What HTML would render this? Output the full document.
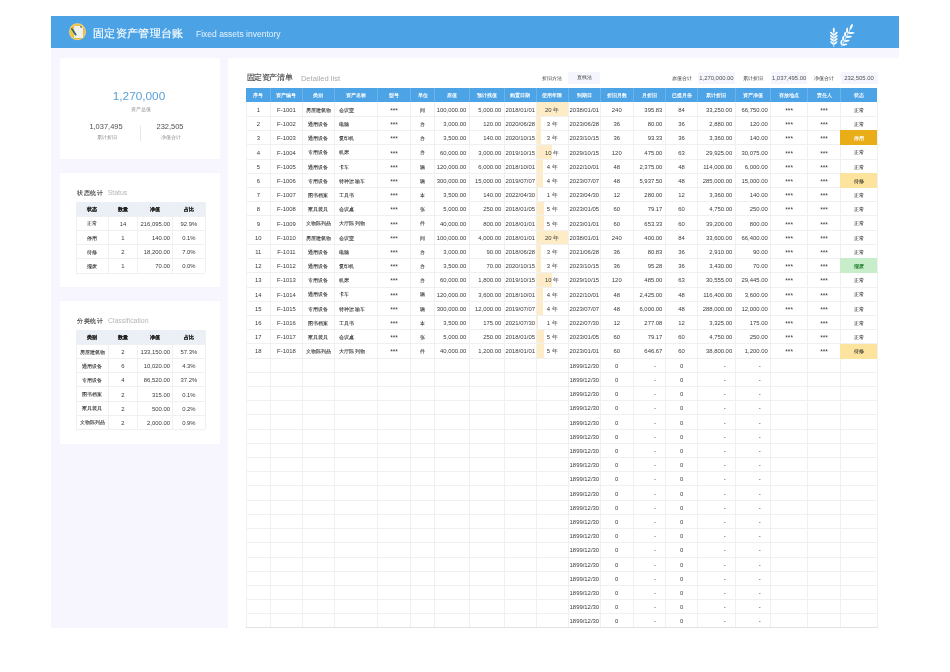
<!DOCTYPE html>
<html><head><meta charset="utf-8"><title>固定资产管理台账</title>
<style>
html,body{margin:0;padding:0;}
body{will-change:transform;width:950px;height:672px;position:relative;overflow:hidden;background:#fff;font-family:'Liberation Sans', sans-serif;color:#333;}
div{position:absolute;box-sizing:border-box;}
.hdrbar{left:51px;top:16px;width:848px;height:31.8px;background:#4ba3e6;}
.lav{background:#f7f6fe;}
.pnl{background:#fff;}
.hd{background:#4ca3e5;}
.hv{width:1px;background:rgba(255,255,255,0.18);}
.th{color:#fff;font-size:5px;text-align:center;white-space:nowrap;font-weight:bold;}
.td{font-size:5.9px;color:#3a3a3a;white-space:nowrap;padding-top:0.6px}
.tds{font-size:6.6px;color:#3a3a3a;white-space:nowrap;padding-top:1.6px}
.tz{font-size:5px;color:#2e2e2e;white-space:nowrap;letter-spacing:0.1px;padding-top:0.4px;-webkit-text-stroke:0.08px #2e2e2e}
.tzw{font-size:5px;color:#fff;white-space:nowrap;padding-top:0.4px;-webkit-text-stroke:0.15px #fff}
.tzg{font-size:5px;color:#1d7a2a;white-space:nowrap;padding-top:0.4px;-webkit-text-stroke:0.15px #1d7a2a}
.dash{font-size:5.9px;color:#3a3a3a;white-space:nowrap;padding-top:0.6px}
.bar{background:#fdecc6;}
.st1{background:#e9ad17;}
.st2{background:#fde49e;}
.st3{background:#c8edca;}
.gh{height:1px;background:#f0f0f0;}
.gv{width:1px;background:#f0f0f0;}
.gb{height:1.2px;background:#e2e2e2;}
.sh{background:#ebf0f7;}
.sth{font-size:5px;color:#222;text-align:center;white-space:nowrap;font-weight:bold;-webkit-text-stroke:0.12px #222}
.std{font-size:5.9px;color:#3a3a3a;white-space:nowrap;padding-top:0.7px}
.stz{font-size:5px;color:#2e2e2e;white-space:nowrap;-webkit-text-stroke:0.08px #2e2e2e}
</style></head><body>
<div class="hdrbar"></div>
<svg style="position:absolute;left:68px;top:22px" width="19" height="19" viewBox="0 0 19 19">
 <circle cx="9.5" cy="9.8" r="8.5" fill="#f3d77e"/>
 <circle cx="9.5" cy="9.8" r="7.7" fill="#efc445"/>
 <path d="M6.8 4.6 L13.6 4.6 L15.6 6.6 L15.6 16.4 L6.8 16.4 Z" fill="#dcae35" opacity="0.7"/>
 <path d="M6.2 3.9 L13.2 3.9 L15.0 5.8 L15.0 15.9 L6.2 15.9 Z" fill="#eef0f2"/>
 <path d="M3.7 7.4 L4.5 6.9 L8.3 12.7 L7.5 13.3 Z" fill="#2b6b73" stroke="#2b6b73" stroke-width="0.9"/>
 <path d="M3.3 6.6 L4.3 6.1" stroke="#1c2b30" stroke-width="0.9"/>
 <path d="M12.4 4.4 L13.6 5.6" stroke="#2b4b55" stroke-width="1.1"/>
</svg>
<div style="left:93px;top:26px;font-size:11px;letter-spacing:0.35px;color:#fff;-webkit-text-stroke:0.15px #fff;white-space:nowrap;line-height:14px">固定资产管理台账</div>
<div style="left:196px;top:29px;font-size:8.5px;color:#e8f3fc;white-space:nowrap;line-height:10px">Fixed assets inventory</div>
<svg style="position:absolute;left:826px;top:22px" width="32" height="26" viewBox="0 0 32 26">

 <g fill="#fff">
  <rect x="7.45" y="8" width="0.7" height="17" />
  <ellipse cx="7.8" cy="8.0" rx="1.0" ry="2.6"/>
  <ellipse cx="5.9" cy="11.6" rx="0.95" ry="2.4" transform="rotate(-48 5.9 11.6)"/>
  <ellipse cx="9.7" cy="11.6" rx="0.95" ry="2.4" transform="rotate(48 9.7 11.6)"/>
  <ellipse cx="5.9" cy="14.7" rx="0.95" ry="2.4" transform="rotate(-48 5.9 14.7)"/>
  <ellipse cx="9.7" cy="14.7" rx="0.95" ry="2.4" transform="rotate(48 9.7 14.7)"/>
  <ellipse cx="5.9" cy="17.8" rx="0.95" ry="2.4" transform="rotate(-48 5.9 17.8)"/>
  <ellipse cx="9.7" cy="17.8" rx="0.95" ry="2.4" transform="rotate(48 9.7 17.8)"/>
  <ellipse cx="6.0" cy="20.9" rx="0.95" ry="2.3" transform="rotate(-48 6.0 20.9)"/>
  <ellipse cx="9.6" cy="20.9" rx="0.95" ry="2.3" transform="rotate(48 9.6 20.9)"/>
  <g transform="translate(15.6 24.6) rotate(26)">
   <rect x="-0.35" y="-22" width="0.7" height="22"/>
   <ellipse cx="0" cy="-22" rx="1.1" ry="3.0"/>
   <ellipse cx="-2.2" cy="-17" rx="1.0" ry="2.9" transform="rotate(-22 -2.2 -17)"/>
   <ellipse cx="2.7" cy="-16.5" rx="1.0" ry="3.3" transform="rotate(62 2.7 -16.5)"/>
   <ellipse cx="-2.2" cy="-12.5" rx="1.0" ry="2.7" transform="rotate(-22 -2.2 -12.5)"/>
   <ellipse cx="2.4" cy="-12" rx="1.0" ry="2.9" transform="rotate(58 2.4 -12)"/>
   <ellipse cx="-2.2" cy="-8" rx="1.0" ry="2.6" transform="rotate(-22 -2.2 -8)"/>
   <ellipse cx="2.2" cy="-7.5" rx="0.95" ry="2.7" transform="rotate(55 2.2 -7.5)"/>
   <ellipse cx="-2.0" cy="-3.6" rx="0.95" ry="2.4" transform="rotate(-22 -2.0 -3.6)"/>
   <ellipse cx="2.0" cy="-3.2" rx="0.95" ry="2.5" transform="rotate(55 2.0 -3.2)"/>
  </g>
 </g>
</svg>
<div class="lav" style="left:51px;top:47.8px;width:848px;height:10.2px"></div>
<div class="lav" style="left:51px;top:58px;width:177px;height:570.4px"></div>
<div class="pnl" style="left:60.3px;top:58px;width:160px;height:101px"></div>
<div class="pnl" style="left:60.3px;top:173px;width:160px;height:114px"></div>
<div class="pnl" style="left:60.3px;top:300.8px;width:160px;height:143px"></div>
<div style="left:60px;top:89px;width:158px;text-align:center;font-size:11.8px;color:#5a9fd6;line-height:14px">1,270,000</div>
<div style="left:61.6px;top:107px;width:158px;text-align:center;font-size:4.6px;color:#888;line-height:6px">资产总值</div>
<div style="left:76px;top:121.5px;width:60px;text-align:center;font-size:7.46px;color:#505050;line-height:10px">1,037,495</div>
<div style="left:140px;top:121.5px;width:60px;text-align:center;font-size:7.46px;color:#505050;line-height:10px">232,505</div>
<div style="left:77.4px;top:135.3px;width:60px;text-align:center;font-size:4.6px;color:#888;line-height:6px">累计折旧</div>
<div style="left:141.4px;top:135.3px;width:60px;text-align:center;font-size:4.6px;color:#888;line-height:6px">净值合计</div>
<div style="left:140px;top:126px;width:0.8px;height:15px;background:#e6e6e6"></div>
<div style="left:77px;top:189.4px;font-size:6px;letter-spacing:0.6px;color:#444;-webkit-text-stroke:0.15px #444;white-space:nowrap;line-height:8px">状态统计 <span style="letter-spacing:0;-webkit-text-stroke:0"><span style="color:#b5b5b5;font-size:6.9px;margin-left:2px">Status</span></span></div>
<div style="left:77px;top:316.9px;font-size:6px;letter-spacing:0.65px;color:#444;-webkit-text-stroke:0.15px #444;white-space:nowrap;line-height:8px">分类统计 <span style="letter-spacing:0;-webkit-text-stroke:0"><span style="color:#b5b5b5;font-size:6.9px;margin-left:2px">Classification</span></span></div>
<div class="sh" style="left:76.2px;top:202.0px;width:129.0px;height:14.4px"></div>
<div class="sth" style="left:76.2px;top:202.00px;width:32.20px;height:14.40px;line-height:14.40px">状态</div>
<div class="sth" style="left:108.4px;top:202.00px;width:29.10px;height:14.40px;line-height:14.40px">数量</div>
<div class="sth" style="left:137.5px;top:202.00px;width:35.00px;height:14.40px;line-height:14.40px">净值</div>
<div class="sth" style="left:172.5px;top:202.00px;width:32.70px;height:14.40px;line-height:14.40px">占比</div>
<div class="stz" style="left:76.20px;width:32.20px;text-align:center;top:216.40px;height:14.20px;line-height:14.20px">正常</div>
<div class="std" style="left:108.40px;width:29.10px;text-align:center;top:216.40px;height:14.20px;line-height:14.20px">14</div>
<div class="std" style="left:137.50px;width:32.50px;text-align:right;top:216.40px;height:14.20px;line-height:14.20px">216,095.00</div>
<div class="std" style="left:172.50px;width:32.70px;text-align:center;top:216.40px;height:14.20px;line-height:14.20px">92.9%</div>
<div class="stz" style="left:76.20px;width:32.20px;text-align:center;top:230.60px;height:14.10px;line-height:14.10px">停用</div>
<div class="std" style="left:108.40px;width:29.10px;text-align:center;top:230.60px;height:14.10px;line-height:14.10px">1</div>
<div class="std" style="left:137.50px;width:32.50px;text-align:right;top:230.60px;height:14.10px;line-height:14.10px">140.00</div>
<div class="std" style="left:172.50px;width:32.70px;text-align:center;top:230.60px;height:14.10px;line-height:14.10px">0.1%</div>
<div class="stz" style="left:76.20px;width:32.20px;text-align:center;top:244.70px;height:14.10px;line-height:14.10px">待修</div>
<div class="std" style="left:108.40px;width:29.10px;text-align:center;top:244.70px;height:14.10px;line-height:14.10px">2</div>
<div class="std" style="left:137.50px;width:32.50px;text-align:right;top:244.70px;height:14.10px;line-height:14.10px">18,200.00</div>
<div class="std" style="left:172.50px;width:32.70px;text-align:center;top:244.70px;height:14.10px;line-height:14.10px">7.0%</div>
<div class="stz" style="left:76.20px;width:32.20px;text-align:center;top:258.80px;height:14.30px;line-height:14.30px">报废</div>
<div class="std" style="left:108.40px;width:29.10px;text-align:center;top:258.80px;height:14.30px;line-height:14.30px">1</div>
<div class="std" style="left:137.50px;width:32.50px;text-align:right;top:258.80px;height:14.30px;line-height:14.30px">70.00</div>
<div class="std" style="left:172.50px;width:32.70px;text-align:center;top:258.80px;height:14.30px;line-height:14.30px">0.0%</div>
<div class="gh" style="left:76.2px;top:215.90px;width:129.0px"></div>
<div class="gh" style="left:76.2px;top:230.10px;width:129.0px"></div>
<div class="gh" style="left:76.2px;top:244.20px;width:129.0px"></div>
<div class="gh" style="left:76.2px;top:258.30px;width:129.0px"></div>
<div class="gh" style="left:76.2px;top:272.60px;width:129.0px"></div>
<div class="gv" style="left:75.70px;top:202.00px;height:71.10px"></div>
<div class="gv" style="left:107.90px;top:202.00px;height:71.10px"></div>
<div class="gv" style="left:137.00px;top:202.00px;height:71.10px"></div>
<div class="gv" style="left:172.00px;top:202.00px;height:71.10px"></div>
<div class="gv" style="left:204.70px;top:202.00px;height:71.10px"></div>
<div class="sh" style="left:76.2px;top:330.0px;width:129.0px;height:14.6px"></div>
<div class="sth" style="left:76.2px;top:330.00px;width:32.20px;height:14.60px;line-height:14.60px">类别</div>
<div class="sth" style="left:108.4px;top:330.00px;width:29.10px;height:14.60px;line-height:14.60px">数量</div>
<div class="sth" style="left:137.5px;top:330.00px;width:35.00px;height:14.60px;line-height:14.60px">净值</div>
<div class="sth" style="left:172.5px;top:330.00px;width:32.70px;height:14.60px;line-height:14.60px">占比</div>
<div class="stz" style="left:76.20px;width:32.20px;text-align:center;top:344.60px;height:14.00px;line-height:14.00px">房屋建筑物</div>
<div class="std" style="left:108.40px;width:29.10px;text-align:center;top:344.60px;height:14.00px;line-height:14.00px">2</div>
<div class="std" style="left:137.50px;width:32.50px;text-align:right;top:344.60px;height:14.00px;line-height:14.00px">133,150.00</div>
<div class="std" style="left:172.50px;width:32.70px;text-align:center;top:344.60px;height:14.00px;line-height:14.00px">57.3%</div>
<div class="stz" style="left:76.20px;width:32.20px;text-align:center;top:358.60px;height:14.10px;line-height:14.10px">通用设备</div>
<div class="std" style="left:108.40px;width:29.10px;text-align:center;top:358.60px;height:14.10px;line-height:14.10px">6</div>
<div class="std" style="left:137.50px;width:32.50px;text-align:right;top:358.60px;height:14.10px;line-height:14.10px">10,020.00</div>
<div class="std" style="left:172.50px;width:32.70px;text-align:center;top:358.60px;height:14.10px;line-height:14.10px">4.3%</div>
<div class="stz" style="left:76.20px;width:32.20px;text-align:center;top:372.70px;height:14.20px;line-height:14.20px">专用设备</div>
<div class="std" style="left:108.40px;width:29.10px;text-align:center;top:372.70px;height:14.20px;line-height:14.20px">4</div>
<div class="std" style="left:137.50px;width:32.50px;text-align:right;top:372.70px;height:14.20px;line-height:14.20px">86,520.00</div>
<div class="std" style="left:172.50px;width:32.70px;text-align:center;top:372.70px;height:14.20px;line-height:14.20px">37.2%</div>
<div class="stz" style="left:76.20px;width:32.20px;text-align:center;top:386.90px;height:14.20px;line-height:14.20px">图书档案</div>
<div class="std" style="left:108.40px;width:29.10px;text-align:center;top:386.90px;height:14.20px;line-height:14.20px">2</div>
<div class="std" style="left:137.50px;width:32.50px;text-align:right;top:386.90px;height:14.20px;line-height:14.20px">315.00</div>
<div class="std" style="left:172.50px;width:32.70px;text-align:center;top:386.90px;height:14.20px;line-height:14.20px">0.1%</div>
<div class="stz" style="left:76.20px;width:32.20px;text-align:center;top:401.10px;height:14.20px;line-height:14.20px">家具装具</div>
<div class="std" style="left:108.40px;width:29.10px;text-align:center;top:401.10px;height:14.20px;line-height:14.20px">2</div>
<div class="std" style="left:137.50px;width:32.50px;text-align:right;top:401.10px;height:14.20px;line-height:14.20px">500.00</div>
<div class="std" style="left:172.50px;width:32.70px;text-align:center;top:401.10px;height:14.20px;line-height:14.20px">0.2%</div>
<div class="stz" style="left:76.20px;width:32.20px;text-align:center;top:415.30px;height:14.00px;line-height:14.00px">文物陈列品</div>
<div class="std" style="left:108.40px;width:29.10px;text-align:center;top:415.30px;height:14.00px;line-height:14.00px">2</div>
<div class="std" style="left:137.50px;width:32.50px;text-align:right;top:415.30px;height:14.00px;line-height:14.00px">2,000.00</div>
<div class="std" style="left:172.50px;width:32.70px;text-align:center;top:415.30px;height:14.00px;line-height:14.00px">0.9%</div>
<div class="gh" style="left:76.2px;top:344.10px;width:129.0px"></div>
<div class="gh" style="left:76.2px;top:358.10px;width:129.0px"></div>
<div class="gh" style="left:76.2px;top:372.20px;width:129.0px"></div>
<div class="gh" style="left:76.2px;top:386.40px;width:129.0px"></div>
<div class="gh" style="left:76.2px;top:400.60px;width:129.0px"></div>
<div class="gh" style="left:76.2px;top:414.80px;width:129.0px"></div>
<div class="gh" style="left:76.2px;top:428.80px;width:129.0px"></div>
<div class="gv" style="left:75.70px;top:330.00px;height:99.30px"></div>
<div class="gv" style="left:107.90px;top:330.00px;height:99.30px"></div>
<div class="gv" style="left:137.00px;top:330.00px;height:99.30px"></div>
<div class="gv" style="left:172.00px;top:330.00px;height:99.30px"></div>
<div class="gv" style="left:204.70px;top:330.00px;height:99.30px"></div>
<div style="left:246.6px;top:73.3px;font-size:8px;letter-spacing:-0.4px;color:#333;-webkit-text-stroke:0.1px #333;white-space:nowrap;line-height:9px">固定资产清单</div>
<div style="left:300.9px;top:73.5px;font-size:7.6px;color:#aaa;white-space:nowrap;line-height:9px">Detailed list</div>
<div style="left:536.2px;top:72px;width:32px;height:11.5px;line-height:11.5px;padding-top:0.5px;text-align:center;font-size:5px;color:#333">折旧方法</div>
<div style="left:568.2px;top:71.8px;width:32.3px;height:11.8px;line-height:11.8px;padding-top:0.5px;text-align:center;font-size:5px;color:#333;background:#f5f5fd">直线法</div>
<div style="left:665.4px;top:72px;width:32.3px;height:11.5px;line-height:11.5px;padding-top:0.5px;text-align:center;font-size:5px;color:#333">原值合计</div>
<div style="left:697.7px;top:71.8px;width:37.5px;height:11.8px;line-height:11.8px;padding-top:1px;text-align:center;font-size:5.9px;color:#505050;background:#f5f5fd">1,270,000.00</div>
<div style="left:735.2px;top:72px;width:35.6px;height:11.5px;line-height:11.5px;padding-top:0.5px;text-align:center;font-size:5px;color:#333">累计折旧</div>
<div style="left:770.8px;top:71.8px;width:36.7px;height:11.8px;line-height:11.8px;padding-top:1px;text-align:center;font-size:5.9px;color:#505050;background:#f5f5fd">1,037,495.00</div>
<div style="left:807.5px;top:72px;width:33px;height:11.5px;line-height:11.5px;padding-top:0.5px;text-align:center;font-size:5px;color:#333">净值合计</div>
<div style="left:840.5px;top:71.8px;width:37px;height:11.8px;line-height:11.8px;padding-top:1px;text-align:center;font-size:5.9px;color:#505050;background:#f5f5fd">232,505.00</div>
<div class="hd" style="left:246.2px;top:88.2px;width:631.3px;height:14.1px"></div>
<div class="hv" style="left:269.90px;top:88.2px;height:14.1px"></div>
<div class="hv" style="left:302.00px;top:88.2px;height:14.1px"></div>
<div class="hv" style="left:333.80px;top:88.2px;height:14.1px"></div>
<div class="hv" style="left:377.10px;top:88.2px;height:14.1px"></div>
<div class="hv" style="left:409.90px;top:88.2px;height:14.1px"></div>
<div class="hv" style="left:434.30px;top:88.2px;height:14.1px"></div>
<div class="hv" style="left:468.80px;top:88.2px;height:14.1px"></div>
<div class="hv" style="left:503.80px;top:88.2px;height:14.1px"></div>
<div class="hv" style="left:535.70px;top:88.2px;height:14.1px"></div>
<div class="hv" style="left:567.70px;top:88.2px;height:14.1px"></div>
<div class="hv" style="left:600.00px;top:88.2px;height:14.1px"></div>
<div class="hv" style="left:632.50px;top:88.2px;height:14.1px"></div>
<div class="hv" style="left:664.90px;top:88.2px;height:14.1px"></div>
<div class="hv" style="left:697.20px;top:88.2px;height:14.1px"></div>
<div class="hv" style="left:734.70px;top:88.2px;height:14.1px"></div>
<div class="hv" style="left:770.30px;top:88.2px;height:14.1px"></div>
<div class="hv" style="left:807.00px;top:88.2px;height:14.1px"></div>
<div class="hv" style="left:840.00px;top:88.2px;height:14.1px"></div>
<div class="th" style="left:246.2px;top:88.2px;width:24.20px;height:14.1px;line-height:14.1px">序号</div>
<div class="th" style="left:270.4px;top:88.2px;width:32.10px;height:14.1px;line-height:14.1px">资产编号</div>
<div class="th" style="left:302.5px;top:88.2px;width:31.80px;height:14.1px;line-height:14.1px">类别</div>
<div class="th" style="left:334.3px;top:88.2px;width:43.30px;height:14.1px;line-height:14.1px">资产名称</div>
<div class="th" style="left:377.6px;top:88.2px;width:32.80px;height:14.1px;line-height:14.1px">型号</div>
<div class="th" style="left:410.4px;top:88.2px;width:24.40px;height:14.1px;line-height:14.1px">单位</div>
<div class="th" style="left:434.8px;top:88.2px;width:34.50px;height:14.1px;line-height:14.1px">原值</div>
<div class="th" style="left:469.3px;top:88.2px;width:35.00px;height:14.1px;line-height:14.1px">预计残值</div>
<div class="th" style="left:504.3px;top:88.2px;width:31.90px;height:14.1px;line-height:14.1px">购置日期</div>
<div class="th" style="left:536.2px;top:88.2px;width:32.00px;height:14.1px;line-height:14.1px">使用年限</div>
<div class="th" style="left:568.2px;top:88.2px;width:32.30px;height:14.1px;line-height:14.1px">到期日</div>
<div class="th" style="left:600.5px;top:88.2px;width:32.50px;height:14.1px;line-height:14.1px">折旧月数</div>
<div class="th" style="left:633.0px;top:88.2px;width:32.40px;height:14.1px;line-height:14.1px">月折旧</div>
<div class="th" style="left:665.4px;top:88.2px;width:32.30px;height:14.1px;line-height:14.1px">已提月份</div>
<div class="th" style="left:697.7px;top:88.2px;width:37.50px;height:14.1px;line-height:14.1px">累计折旧</div>
<div class="th" style="left:735.2px;top:88.2px;width:35.60px;height:14.1px;line-height:14.1px">资产净值</div>
<div class="th" style="left:770.8px;top:88.2px;width:36.70px;height:14.1px;line-height:14.1px">存放地点</div>
<div class="th" style="left:807.5px;top:88.2px;width:33.00px;height:14.1px;line-height:14.1px">责任人</div>
<div class="th" style="left:840.5px;top:88.2px;width:37.00px;height:14.1px;line-height:14.1px">状态</div>
<div class="bar" style="left:536.20px;top:102.30px;width:32.00px;height:14.21px"></div>
<div class="bar" style="left:536.20px;top:116.51px;width:4.80px;height:14.21px"></div>
<div class="bar" style="left:536.20px;top:130.72px;width:4.80px;height:14.21px"></div>
<div class="bar" style="left:536.20px;top:144.93px;width:16.00px;height:14.21px"></div>
<div class="bar" style="left:536.20px;top:159.14px;width:6.40px;height:14.21px"></div>
<div class="bar" style="left:536.20px;top:173.35px;width:6.40px;height:14.21px"></div>
<div class="bar" style="left:536.20px;top:187.56px;width:1.60px;height:14.21px"></div>
<div class="bar" style="left:536.20px;top:201.77px;width:8.00px;height:14.21px"></div>
<div class="bar" style="left:536.20px;top:215.98px;width:8.00px;height:14.21px"></div>
<div class="bar" style="left:536.20px;top:230.19px;width:32.00px;height:14.21px"></div>
<div class="bar" style="left:536.20px;top:244.40px;width:4.80px;height:14.21px"></div>
<div class="bar" style="left:536.20px;top:258.61px;width:4.80px;height:14.21px"></div>
<div class="bar" style="left:536.20px;top:272.82px;width:16.00px;height:14.21px"></div>
<div class="bar" style="left:536.20px;top:287.03px;width:6.40px;height:14.21px"></div>
<div class="bar" style="left:536.20px;top:301.24px;width:6.40px;height:14.21px"></div>
<div class="bar" style="left:536.20px;top:315.45px;width:1.60px;height:14.21px"></div>
<div class="bar" style="left:536.20px;top:329.66px;width:8.00px;height:14.21px"></div>
<div class="bar" style="left:536.20px;top:343.87px;width:8.00px;height:14.21px"></div>
<div class="gh" style="left:246.2px;top:116.01px;width:631.30px"></div>
<div class="gh" style="left:246.2px;top:130.22px;width:631.30px"></div>
<div class="gh" style="left:246.2px;top:144.43px;width:631.30px"></div>
<div class="gh" style="left:246.2px;top:158.64px;width:631.30px"></div>
<div class="gh" style="left:246.2px;top:172.85px;width:631.30px"></div>
<div class="gh" style="left:246.2px;top:187.06px;width:631.30px"></div>
<div class="gh" style="left:246.2px;top:201.27px;width:631.30px"></div>
<div class="gh" style="left:246.2px;top:215.48px;width:631.30px"></div>
<div class="gh" style="left:246.2px;top:229.69px;width:631.30px"></div>
<div class="gh" style="left:246.2px;top:243.90px;width:631.30px"></div>
<div class="gh" style="left:246.2px;top:258.11px;width:631.30px"></div>
<div class="gh" style="left:246.2px;top:272.32px;width:631.30px"></div>
<div class="gh" style="left:246.2px;top:286.53px;width:631.30px"></div>
<div class="gh" style="left:246.2px;top:300.74px;width:631.30px"></div>
<div class="gh" style="left:246.2px;top:314.95px;width:631.30px"></div>
<div class="gh" style="left:246.2px;top:329.16px;width:631.30px"></div>
<div class="gh" style="left:246.2px;top:343.37px;width:631.30px"></div>
<div class="gh" style="left:246.2px;top:357.58px;width:631.30px"></div>
<div class="gh" style="left:246.2px;top:371.79px;width:631.30px"></div>
<div class="gh" style="left:246.2px;top:386.00px;width:631.30px"></div>
<div class="gh" style="left:246.2px;top:400.21px;width:631.30px"></div>
<div class="gh" style="left:246.2px;top:414.42px;width:631.30px"></div>
<div class="gh" style="left:246.2px;top:428.63px;width:631.30px"></div>
<div class="gh" style="left:246.2px;top:442.84px;width:631.30px"></div>
<div class="gh" style="left:246.2px;top:457.05px;width:631.30px"></div>
<div class="gh" style="left:246.2px;top:471.26px;width:631.30px"></div>
<div class="gh" style="left:246.2px;top:485.47px;width:631.30px"></div>
<div class="gh" style="left:246.2px;top:499.68px;width:631.30px"></div>
<div class="gh" style="left:246.2px;top:513.89px;width:631.30px"></div>
<div class="gh" style="left:246.2px;top:528.10px;width:631.30px"></div>
<div class="gh" style="left:246.2px;top:542.31px;width:631.30px"></div>
<div class="gh" style="left:246.2px;top:556.52px;width:631.30px"></div>
<div class="gh" style="left:246.2px;top:570.73px;width:631.30px"></div>
<div class="gh" style="left:246.2px;top:584.94px;width:631.30px"></div>
<div class="gh" style="left:246.2px;top:599.15px;width:631.30px"></div>
<div class="gh" style="left:246.2px;top:613.36px;width:631.30px"></div>
<div class="gv" style="left:245.70px;top:102.30px;height:525.77px"></div>
<div class="gv" style="left:269.90px;top:102.30px;height:525.77px"></div>
<div class="gv" style="left:302.00px;top:102.30px;height:525.77px"></div>
<div class="gv" style="left:333.80px;top:102.30px;height:525.77px"></div>
<div class="gv" style="left:377.10px;top:102.30px;height:525.77px"></div>
<div class="gv" style="left:409.90px;top:102.30px;height:525.77px"></div>
<div class="gv" style="left:434.30px;top:102.30px;height:525.77px"></div>
<div class="gv" style="left:468.80px;top:102.30px;height:525.77px"></div>
<div class="gv" style="left:503.80px;top:102.30px;height:525.77px"></div>
<div class="gv" style="left:535.70px;top:102.30px;height:525.77px"></div>
<div class="gv" style="left:567.70px;top:102.30px;height:525.77px"></div>
<div class="gv" style="left:600.00px;top:102.30px;height:525.77px"></div>
<div class="gv" style="left:632.50px;top:102.30px;height:525.77px"></div>
<div class="gv" style="left:664.90px;top:102.30px;height:525.77px"></div>
<div class="gv" style="left:697.20px;top:102.30px;height:525.77px"></div>
<div class="gv" style="left:734.70px;top:102.30px;height:525.77px"></div>
<div class="gv" style="left:770.30px;top:102.30px;height:525.77px"></div>
<div class="gv" style="left:807.00px;top:102.30px;height:525.77px"></div>
<div class="gv" style="left:840.00px;top:102.30px;height:525.77px"></div>
<div class="gv" style="left:877.00px;top:102.30px;height:525.77px"></div>
<div class="gb" style="left:245.7px;top:627.27px;width:632.30px"></div>
<div class="st1" style="left:840.10px;top:130.42px;width:37.40px;height:15.01px"></div>
<div class="st2" style="left:840.10px;top:173.05px;width:37.40px;height:15.01px"></div>
<div class="st3" style="left:840.10px;top:258.31px;width:37.40px;height:15.01px"></div>
<div class="st2" style="left:840.10px;top:343.57px;width:37.40px;height:15.01px"></div>
<div class="td" style="left:246.20px;width:24.20px;text-align:center;top:102.30px;height:14.21px;line-height:14.21px">1</div>
<div class="td" style="left:270.40px;width:32.10px;text-align:center;top:102.30px;height:14.21px;line-height:14.21px">F-1001</div>
<div class="tz" style="left:302.50px;width:31.80px;text-align:center;top:102.30px;height:14.21px;line-height:14.21px">房屋建筑物</div>
<div class="tz" style="left:339.30px;width:43.30px;text-align:left;top:102.30px;height:14.21px;line-height:14.21px">会议室</div>
<div class="tds" style="left:377.60px;width:32.80px;text-align:center;top:102.30px;height:14.21px;line-height:14.21px">***</div>
<div class="tz" style="left:410.40px;width:24.40px;text-align:center;top:102.30px;height:14.21px;line-height:14.21px">间</div>
<div class="td" style="left:434.80px;width:31.50px;text-align:right;top:102.30px;height:14.21px;line-height:14.21px">100,000.00</div>
<div class="td" style="left:469.30px;width:32.00px;text-align:right;top:102.30px;height:14.21px;line-height:14.21px">5,000.00</div>
<div class="td" style="left:504.30px;width:31.90px;text-align:center;top:102.30px;height:14.21px;line-height:14.21px">2018/01/01</div>
<div class="td" style="left:536.20px;width:32.00px;text-align:center;top:102.30px;height:14.21px;line-height:14.21px">20 年</div>
<div class="td" style="left:568.20px;width:32.30px;text-align:center;top:102.30px;height:14.21px;line-height:14.21px">2038/01/01</div>
<div class="td" style="left:600.50px;width:32.50px;text-align:center;top:102.30px;height:14.21px;line-height:14.21px">240</div>
<div class="td" style="left:633.00px;width:29.40px;text-align:right;top:102.30px;height:14.21px;line-height:14.21px">395.83</div>
<div class="td" style="left:665.40px;width:32.30px;text-align:center;top:102.30px;height:14.21px;line-height:14.21px">84</div>
<div class="td" style="left:697.70px;width:34.50px;text-align:right;top:102.30px;height:14.21px;line-height:14.21px">33,250.00</div>
<div class="td" style="left:735.20px;width:32.60px;text-align:right;top:102.30px;height:14.21px;line-height:14.21px">66,750.00</div>
<div class="tds" style="left:770.80px;width:36.70px;text-align:center;top:102.30px;height:14.21px;line-height:14.21px">***</div>
<div class="tds" style="left:807.50px;width:33.00px;text-align:center;top:102.30px;height:14.21px;line-height:14.21px">***</div>
<div class="tz" style="left:840.50px;width:37.00px;text-align:center;top:102.30px;height:14.21px;line-height:14.21px">正常</div>
<div class="td" style="left:246.20px;width:24.20px;text-align:center;top:116.51px;height:14.21px;line-height:14.21px">2</div>
<div class="td" style="left:270.40px;width:32.10px;text-align:center;top:116.51px;height:14.21px;line-height:14.21px">F-1002</div>
<div class="tz" style="left:302.50px;width:31.80px;text-align:center;top:116.51px;height:14.21px;line-height:14.21px">通用设备</div>
<div class="tz" style="left:339.30px;width:43.30px;text-align:left;top:116.51px;height:14.21px;line-height:14.21px">电脑</div>
<div class="tds" style="left:377.60px;width:32.80px;text-align:center;top:116.51px;height:14.21px;line-height:14.21px">***</div>
<div class="tz" style="left:410.40px;width:24.40px;text-align:center;top:116.51px;height:14.21px;line-height:14.21px">台</div>
<div class="td" style="left:434.80px;width:31.50px;text-align:right;top:116.51px;height:14.21px;line-height:14.21px">3,000.00</div>
<div class="td" style="left:469.30px;width:32.00px;text-align:right;top:116.51px;height:14.21px;line-height:14.21px">120.00</div>
<div class="td" style="left:504.30px;width:31.90px;text-align:center;top:116.51px;height:14.21px;line-height:14.21px">2020/06/28</div>
<div class="td" style="left:536.20px;width:32.00px;text-align:center;top:116.51px;height:14.21px;line-height:14.21px">3 年</div>
<div class="td" style="left:568.20px;width:32.30px;text-align:center;top:116.51px;height:14.21px;line-height:14.21px">2023/06/28</div>
<div class="td" style="left:600.50px;width:32.50px;text-align:center;top:116.51px;height:14.21px;line-height:14.21px">36</div>
<div class="td" style="left:633.00px;width:29.40px;text-align:right;top:116.51px;height:14.21px;line-height:14.21px">80.00</div>
<div class="td" style="left:665.40px;width:32.30px;text-align:center;top:116.51px;height:14.21px;line-height:14.21px">36</div>
<div class="td" style="left:697.70px;width:34.50px;text-align:right;top:116.51px;height:14.21px;line-height:14.21px">2,880.00</div>
<div class="td" style="left:735.20px;width:32.60px;text-align:right;top:116.51px;height:14.21px;line-height:14.21px">120.00</div>
<div class="tds" style="left:770.80px;width:36.70px;text-align:center;top:116.51px;height:14.21px;line-height:14.21px">***</div>
<div class="tds" style="left:807.50px;width:33.00px;text-align:center;top:116.51px;height:14.21px;line-height:14.21px">***</div>
<div class="tz" style="left:840.50px;width:37.00px;text-align:center;top:116.51px;height:14.21px;line-height:14.21px">正常</div>
<div class="td" style="left:246.20px;width:24.20px;text-align:center;top:130.72px;height:14.21px;line-height:14.21px">3</div>
<div class="td" style="left:270.40px;width:32.10px;text-align:center;top:130.72px;height:14.21px;line-height:14.21px">F-1003</div>
<div class="tz" style="left:302.50px;width:31.80px;text-align:center;top:130.72px;height:14.21px;line-height:14.21px">通用设备</div>
<div class="tz" style="left:339.30px;width:43.30px;text-align:left;top:130.72px;height:14.21px;line-height:14.21px">复印机</div>
<div class="tds" style="left:377.60px;width:32.80px;text-align:center;top:130.72px;height:14.21px;line-height:14.21px">***</div>
<div class="tz" style="left:410.40px;width:24.40px;text-align:center;top:130.72px;height:14.21px;line-height:14.21px">台</div>
<div class="td" style="left:434.80px;width:31.50px;text-align:right;top:130.72px;height:14.21px;line-height:14.21px">3,500.00</div>
<div class="td" style="left:469.30px;width:32.00px;text-align:right;top:130.72px;height:14.21px;line-height:14.21px">140.00</div>
<div class="td" style="left:504.30px;width:31.90px;text-align:center;top:130.72px;height:14.21px;line-height:14.21px">2020/10/15</div>
<div class="td" style="left:536.20px;width:32.00px;text-align:center;top:130.72px;height:14.21px;line-height:14.21px">3 年</div>
<div class="td" style="left:568.20px;width:32.30px;text-align:center;top:130.72px;height:14.21px;line-height:14.21px">2023/10/15</div>
<div class="td" style="left:600.50px;width:32.50px;text-align:center;top:130.72px;height:14.21px;line-height:14.21px">36</div>
<div class="td" style="left:633.00px;width:29.40px;text-align:right;top:130.72px;height:14.21px;line-height:14.21px">93.33</div>
<div class="td" style="left:665.40px;width:32.30px;text-align:center;top:130.72px;height:14.21px;line-height:14.21px">36</div>
<div class="td" style="left:697.70px;width:34.50px;text-align:right;top:130.72px;height:14.21px;line-height:14.21px">3,360.00</div>
<div class="td" style="left:735.20px;width:32.60px;text-align:right;top:130.72px;height:14.21px;line-height:14.21px">140.00</div>
<div class="tds" style="left:770.80px;width:36.70px;text-align:center;top:130.72px;height:14.21px;line-height:14.21px">***</div>
<div class="tds" style="left:807.50px;width:33.00px;text-align:center;top:130.72px;height:14.21px;line-height:14.21px">***</div>
<div class="tzw" style="left:840.50px;width:37.00px;text-align:center;top:130.72px;height:14.21px;line-height:14.21px">停用</div>
<div class="td" style="left:246.20px;width:24.20px;text-align:center;top:144.93px;height:14.21px;line-height:14.21px">4</div>
<div class="td" style="left:270.40px;width:32.10px;text-align:center;top:144.93px;height:14.21px;line-height:14.21px">F-1004</div>
<div class="tz" style="left:302.50px;width:31.80px;text-align:center;top:144.93px;height:14.21px;line-height:14.21px">专用设备</div>
<div class="tz" style="left:339.30px;width:43.30px;text-align:left;top:144.93px;height:14.21px;line-height:14.21px">机床</div>
<div class="tds" style="left:377.60px;width:32.80px;text-align:center;top:144.93px;height:14.21px;line-height:14.21px">***</div>
<div class="tz" style="left:410.40px;width:24.40px;text-align:center;top:144.93px;height:14.21px;line-height:14.21px">台</div>
<div class="td" style="left:434.80px;width:31.50px;text-align:right;top:144.93px;height:14.21px;line-height:14.21px">60,000.00</div>
<div class="td" style="left:469.30px;width:32.00px;text-align:right;top:144.93px;height:14.21px;line-height:14.21px">3,000.00</div>
<div class="td" style="left:504.30px;width:31.90px;text-align:center;top:144.93px;height:14.21px;line-height:14.21px">2019/10/15</div>
<div class="td" style="left:536.20px;width:32.00px;text-align:center;top:144.93px;height:14.21px;line-height:14.21px">10 年</div>
<div class="td" style="left:568.20px;width:32.30px;text-align:center;top:144.93px;height:14.21px;line-height:14.21px">2029/10/15</div>
<div class="td" style="left:600.50px;width:32.50px;text-align:center;top:144.93px;height:14.21px;line-height:14.21px">120</div>
<div class="td" style="left:633.00px;width:29.40px;text-align:right;top:144.93px;height:14.21px;line-height:14.21px">475.00</div>
<div class="td" style="left:665.40px;width:32.30px;text-align:center;top:144.93px;height:14.21px;line-height:14.21px">63</div>
<div class="td" style="left:697.70px;width:34.50px;text-align:right;top:144.93px;height:14.21px;line-height:14.21px">29,925.00</div>
<div class="td" style="left:735.20px;width:32.60px;text-align:right;top:144.93px;height:14.21px;line-height:14.21px">30,075.00</div>
<div class="tds" style="left:770.80px;width:36.70px;text-align:center;top:144.93px;height:14.21px;line-height:14.21px">***</div>
<div class="tds" style="left:807.50px;width:33.00px;text-align:center;top:144.93px;height:14.21px;line-height:14.21px">***</div>
<div class="tz" style="left:840.50px;width:37.00px;text-align:center;top:144.93px;height:14.21px;line-height:14.21px">正常</div>
<div class="td" style="left:246.20px;width:24.20px;text-align:center;top:159.14px;height:14.21px;line-height:14.21px">5</div>
<div class="td" style="left:270.40px;width:32.10px;text-align:center;top:159.14px;height:14.21px;line-height:14.21px">F-1005</div>
<div class="tz" style="left:302.50px;width:31.80px;text-align:center;top:159.14px;height:14.21px;line-height:14.21px">通用设备</div>
<div class="tz" style="left:339.30px;width:43.30px;text-align:left;top:159.14px;height:14.21px;line-height:14.21px">卡车</div>
<div class="tds" style="left:377.60px;width:32.80px;text-align:center;top:159.14px;height:14.21px;line-height:14.21px">***</div>
<div class="tz" style="left:410.40px;width:24.40px;text-align:center;top:159.14px;height:14.21px;line-height:14.21px">辆</div>
<div class="td" style="left:434.80px;width:31.50px;text-align:right;top:159.14px;height:14.21px;line-height:14.21px">120,000.00</div>
<div class="td" style="left:469.30px;width:32.00px;text-align:right;top:159.14px;height:14.21px;line-height:14.21px">6,000.00</div>
<div class="td" style="left:504.30px;width:31.90px;text-align:center;top:159.14px;height:14.21px;line-height:14.21px">2018/10/01</div>
<div class="td" style="left:536.20px;width:32.00px;text-align:center;top:159.14px;height:14.21px;line-height:14.21px">4 年</div>
<div class="td" style="left:568.20px;width:32.30px;text-align:center;top:159.14px;height:14.21px;line-height:14.21px">2022/10/01</div>
<div class="td" style="left:600.50px;width:32.50px;text-align:center;top:159.14px;height:14.21px;line-height:14.21px">48</div>
<div class="td" style="left:633.00px;width:29.40px;text-align:right;top:159.14px;height:14.21px;line-height:14.21px">2,375.00</div>
<div class="td" style="left:665.40px;width:32.30px;text-align:center;top:159.14px;height:14.21px;line-height:14.21px">48</div>
<div class="td" style="left:697.70px;width:34.50px;text-align:right;top:159.14px;height:14.21px;line-height:14.21px">114,000.00</div>
<div class="td" style="left:735.20px;width:32.60px;text-align:right;top:159.14px;height:14.21px;line-height:14.21px">6,000.00</div>
<div class="tds" style="left:770.80px;width:36.70px;text-align:center;top:159.14px;height:14.21px;line-height:14.21px">***</div>
<div class="tds" style="left:807.50px;width:33.00px;text-align:center;top:159.14px;height:14.21px;line-height:14.21px">***</div>
<div class="tz" style="left:840.50px;width:37.00px;text-align:center;top:159.14px;height:14.21px;line-height:14.21px">正常</div>
<div class="td" style="left:246.20px;width:24.20px;text-align:center;top:173.35px;height:14.21px;line-height:14.21px">6</div>
<div class="td" style="left:270.40px;width:32.10px;text-align:center;top:173.35px;height:14.21px;line-height:14.21px">F-1006</div>
<div class="tz" style="left:302.50px;width:31.80px;text-align:center;top:173.35px;height:14.21px;line-height:14.21px">专用设备</div>
<div class="tz" style="left:339.30px;width:43.30px;text-align:left;top:173.35px;height:14.21px;line-height:14.21px">特种运输车</div>
<div class="tds" style="left:377.60px;width:32.80px;text-align:center;top:173.35px;height:14.21px;line-height:14.21px">***</div>
<div class="tz" style="left:410.40px;width:24.40px;text-align:center;top:173.35px;height:14.21px;line-height:14.21px">辆</div>
<div class="td" style="left:434.80px;width:31.50px;text-align:right;top:173.35px;height:14.21px;line-height:14.21px">300,000.00</div>
<div class="td" style="left:469.30px;width:32.00px;text-align:right;top:173.35px;height:14.21px;line-height:14.21px">15,000.00</div>
<div class="td" style="left:504.30px;width:31.90px;text-align:center;top:173.35px;height:14.21px;line-height:14.21px">2019/07/07</div>
<div class="td" style="left:536.20px;width:32.00px;text-align:center;top:173.35px;height:14.21px;line-height:14.21px">4 年</div>
<div class="td" style="left:568.20px;width:32.30px;text-align:center;top:173.35px;height:14.21px;line-height:14.21px">2023/07/07</div>
<div class="td" style="left:600.50px;width:32.50px;text-align:center;top:173.35px;height:14.21px;line-height:14.21px">48</div>
<div class="td" style="left:633.00px;width:29.40px;text-align:right;top:173.35px;height:14.21px;line-height:14.21px">5,937.50</div>
<div class="td" style="left:665.40px;width:32.30px;text-align:center;top:173.35px;height:14.21px;line-height:14.21px">48</div>
<div class="td" style="left:697.70px;width:34.50px;text-align:right;top:173.35px;height:14.21px;line-height:14.21px">285,000.00</div>
<div class="td" style="left:735.20px;width:32.60px;text-align:right;top:173.35px;height:14.21px;line-height:14.21px">15,000.00</div>
<div class="tds" style="left:770.80px;width:36.70px;text-align:center;top:173.35px;height:14.21px;line-height:14.21px">***</div>
<div class="tds" style="left:807.50px;width:33.00px;text-align:center;top:173.35px;height:14.21px;line-height:14.21px">***</div>
<div class="tz" style="left:840.50px;width:37.00px;text-align:center;top:173.35px;height:14.21px;line-height:14.21px">待修</div>
<div class="td" style="left:246.20px;width:24.20px;text-align:center;top:187.56px;height:14.21px;line-height:14.21px">7</div>
<div class="td" style="left:270.40px;width:32.10px;text-align:center;top:187.56px;height:14.21px;line-height:14.21px">F-1007</div>
<div class="tz" style="left:302.50px;width:31.80px;text-align:center;top:187.56px;height:14.21px;line-height:14.21px">图书档案</div>
<div class="tz" style="left:339.30px;width:43.30px;text-align:left;top:187.56px;height:14.21px;line-height:14.21px">工具书</div>
<div class="tds" style="left:377.60px;width:32.80px;text-align:center;top:187.56px;height:14.21px;line-height:14.21px">***</div>
<div class="tz" style="left:410.40px;width:24.40px;text-align:center;top:187.56px;height:14.21px;line-height:14.21px">本</div>
<div class="td" style="left:434.80px;width:31.50px;text-align:right;top:187.56px;height:14.21px;line-height:14.21px">3,500.00</div>
<div class="td" style="left:469.30px;width:32.00px;text-align:right;top:187.56px;height:14.21px;line-height:14.21px">140.00</div>
<div class="td" style="left:504.30px;width:31.90px;text-align:center;top:187.56px;height:14.21px;line-height:14.21px">2022/04/30</div>
<div class="td" style="left:536.20px;width:32.00px;text-align:center;top:187.56px;height:14.21px;line-height:14.21px">1 年</div>
<div class="td" style="left:568.20px;width:32.30px;text-align:center;top:187.56px;height:14.21px;line-height:14.21px">2023/04/30</div>
<div class="td" style="left:600.50px;width:32.50px;text-align:center;top:187.56px;height:14.21px;line-height:14.21px">12</div>
<div class="td" style="left:633.00px;width:29.40px;text-align:right;top:187.56px;height:14.21px;line-height:14.21px">280.00</div>
<div class="td" style="left:665.40px;width:32.30px;text-align:center;top:187.56px;height:14.21px;line-height:14.21px">12</div>
<div class="td" style="left:697.70px;width:34.50px;text-align:right;top:187.56px;height:14.21px;line-height:14.21px">3,360.00</div>
<div class="td" style="left:735.20px;width:32.60px;text-align:right;top:187.56px;height:14.21px;line-height:14.21px">140.00</div>
<div class="tds" style="left:770.80px;width:36.70px;text-align:center;top:187.56px;height:14.21px;line-height:14.21px">***</div>
<div class="tds" style="left:807.50px;width:33.00px;text-align:center;top:187.56px;height:14.21px;line-height:14.21px">***</div>
<div class="tz" style="left:840.50px;width:37.00px;text-align:center;top:187.56px;height:14.21px;line-height:14.21px">正常</div>
<div class="td" style="left:246.20px;width:24.20px;text-align:center;top:201.77px;height:14.21px;line-height:14.21px">8</div>
<div class="td" style="left:270.40px;width:32.10px;text-align:center;top:201.77px;height:14.21px;line-height:14.21px">F-1008</div>
<div class="tz" style="left:302.50px;width:31.80px;text-align:center;top:201.77px;height:14.21px;line-height:14.21px">家具装具</div>
<div class="tz" style="left:339.30px;width:43.30px;text-align:left;top:201.77px;height:14.21px;line-height:14.21px">会议桌</div>
<div class="tds" style="left:377.60px;width:32.80px;text-align:center;top:201.77px;height:14.21px;line-height:14.21px">***</div>
<div class="tz" style="left:410.40px;width:24.40px;text-align:center;top:201.77px;height:14.21px;line-height:14.21px">张</div>
<div class="td" style="left:434.80px;width:31.50px;text-align:right;top:201.77px;height:14.21px;line-height:14.21px">5,000.00</div>
<div class="td" style="left:469.30px;width:32.00px;text-align:right;top:201.77px;height:14.21px;line-height:14.21px">250.00</div>
<div class="td" style="left:504.30px;width:31.90px;text-align:center;top:201.77px;height:14.21px;line-height:14.21px">2018/01/05</div>
<div class="td" style="left:536.20px;width:32.00px;text-align:center;top:201.77px;height:14.21px;line-height:14.21px">5 年</div>
<div class="td" style="left:568.20px;width:32.30px;text-align:center;top:201.77px;height:14.21px;line-height:14.21px">2023/01/05</div>
<div class="td" style="left:600.50px;width:32.50px;text-align:center;top:201.77px;height:14.21px;line-height:14.21px">60</div>
<div class="td" style="left:633.00px;width:29.40px;text-align:right;top:201.77px;height:14.21px;line-height:14.21px">79.17</div>
<div class="td" style="left:665.40px;width:32.30px;text-align:center;top:201.77px;height:14.21px;line-height:14.21px">60</div>
<div class="td" style="left:697.70px;width:34.50px;text-align:right;top:201.77px;height:14.21px;line-height:14.21px">4,750.00</div>
<div class="td" style="left:735.20px;width:32.60px;text-align:right;top:201.77px;height:14.21px;line-height:14.21px">250.00</div>
<div class="tds" style="left:770.80px;width:36.70px;text-align:center;top:201.77px;height:14.21px;line-height:14.21px">***</div>
<div class="tds" style="left:807.50px;width:33.00px;text-align:center;top:201.77px;height:14.21px;line-height:14.21px">***</div>
<div class="tz" style="left:840.50px;width:37.00px;text-align:center;top:201.77px;height:14.21px;line-height:14.21px">正常</div>
<div class="td" style="left:246.20px;width:24.20px;text-align:center;top:215.98px;height:14.21px;line-height:14.21px">9</div>
<div class="td" style="left:270.40px;width:32.10px;text-align:center;top:215.98px;height:14.21px;line-height:14.21px">F-1009</div>
<div class="tz" style="left:302.50px;width:31.80px;text-align:center;top:215.98px;height:14.21px;line-height:14.21px">文物陈列品</div>
<div class="tz" style="left:339.30px;width:43.30px;text-align:left;top:215.98px;height:14.21px;line-height:14.21px">大厅陈列物</div>
<div class="tds" style="left:377.60px;width:32.80px;text-align:center;top:215.98px;height:14.21px;line-height:14.21px">***</div>
<div class="tz" style="left:410.40px;width:24.40px;text-align:center;top:215.98px;height:14.21px;line-height:14.21px">件</div>
<div class="td" style="left:434.80px;width:31.50px;text-align:right;top:215.98px;height:14.21px;line-height:14.21px">40,000.00</div>
<div class="td" style="left:469.30px;width:32.00px;text-align:right;top:215.98px;height:14.21px;line-height:14.21px">800.00</div>
<div class="td" style="left:504.30px;width:31.90px;text-align:center;top:215.98px;height:14.21px;line-height:14.21px">2018/01/01</div>
<div class="td" style="left:536.20px;width:32.00px;text-align:center;top:215.98px;height:14.21px;line-height:14.21px">5 年</div>
<div class="td" style="left:568.20px;width:32.30px;text-align:center;top:215.98px;height:14.21px;line-height:14.21px">2023/01/01</div>
<div class="td" style="left:600.50px;width:32.50px;text-align:center;top:215.98px;height:14.21px;line-height:14.21px">60</div>
<div class="td" style="left:633.00px;width:29.40px;text-align:right;top:215.98px;height:14.21px;line-height:14.21px">653.33</div>
<div class="td" style="left:665.40px;width:32.30px;text-align:center;top:215.98px;height:14.21px;line-height:14.21px">60</div>
<div class="td" style="left:697.70px;width:34.50px;text-align:right;top:215.98px;height:14.21px;line-height:14.21px">39,200.00</div>
<div class="td" style="left:735.20px;width:32.60px;text-align:right;top:215.98px;height:14.21px;line-height:14.21px">800.00</div>
<div class="tds" style="left:770.80px;width:36.70px;text-align:center;top:215.98px;height:14.21px;line-height:14.21px">***</div>
<div class="tds" style="left:807.50px;width:33.00px;text-align:center;top:215.98px;height:14.21px;line-height:14.21px">***</div>
<div class="tz" style="left:840.50px;width:37.00px;text-align:center;top:215.98px;height:14.21px;line-height:14.21px">正常</div>
<div class="td" style="left:246.20px;width:24.20px;text-align:center;top:230.19px;height:14.21px;line-height:14.21px">10</div>
<div class="td" style="left:270.40px;width:32.10px;text-align:center;top:230.19px;height:14.21px;line-height:14.21px">F-1010</div>
<div class="tz" style="left:302.50px;width:31.80px;text-align:center;top:230.19px;height:14.21px;line-height:14.21px">房屋建筑物</div>
<div class="tz" style="left:339.30px;width:43.30px;text-align:left;top:230.19px;height:14.21px;line-height:14.21px">会议室</div>
<div class="tds" style="left:377.60px;width:32.80px;text-align:center;top:230.19px;height:14.21px;line-height:14.21px">***</div>
<div class="tz" style="left:410.40px;width:24.40px;text-align:center;top:230.19px;height:14.21px;line-height:14.21px">间</div>
<div class="td" style="left:434.80px;width:31.50px;text-align:right;top:230.19px;height:14.21px;line-height:14.21px">100,000.00</div>
<div class="td" style="left:469.30px;width:32.00px;text-align:right;top:230.19px;height:14.21px;line-height:14.21px">4,000.00</div>
<div class="td" style="left:504.30px;width:31.90px;text-align:center;top:230.19px;height:14.21px;line-height:14.21px">2018/01/01</div>
<div class="td" style="left:536.20px;width:32.00px;text-align:center;top:230.19px;height:14.21px;line-height:14.21px">20 年</div>
<div class="td" style="left:568.20px;width:32.30px;text-align:center;top:230.19px;height:14.21px;line-height:14.21px">2038/01/01</div>
<div class="td" style="left:600.50px;width:32.50px;text-align:center;top:230.19px;height:14.21px;line-height:14.21px">240</div>
<div class="td" style="left:633.00px;width:29.40px;text-align:right;top:230.19px;height:14.21px;line-height:14.21px">400.00</div>
<div class="td" style="left:665.40px;width:32.30px;text-align:center;top:230.19px;height:14.21px;line-height:14.21px">84</div>
<div class="td" style="left:697.70px;width:34.50px;text-align:right;top:230.19px;height:14.21px;line-height:14.21px">33,600.00</div>
<div class="td" style="left:735.20px;width:32.60px;text-align:right;top:230.19px;height:14.21px;line-height:14.21px">66,400.00</div>
<div class="tds" style="left:770.80px;width:36.70px;text-align:center;top:230.19px;height:14.21px;line-height:14.21px">***</div>
<div class="tds" style="left:807.50px;width:33.00px;text-align:center;top:230.19px;height:14.21px;line-height:14.21px">***</div>
<div class="tz" style="left:840.50px;width:37.00px;text-align:center;top:230.19px;height:14.21px;line-height:14.21px">正常</div>
<div class="td" style="left:246.20px;width:24.20px;text-align:center;top:244.40px;height:14.21px;line-height:14.21px">11</div>
<div class="td" style="left:270.40px;width:32.10px;text-align:center;top:244.40px;height:14.21px;line-height:14.21px">F-1011</div>
<div class="tz" style="left:302.50px;width:31.80px;text-align:center;top:244.40px;height:14.21px;line-height:14.21px">通用设备</div>
<div class="tz" style="left:339.30px;width:43.30px;text-align:left;top:244.40px;height:14.21px;line-height:14.21px">电脑</div>
<div class="tds" style="left:377.60px;width:32.80px;text-align:center;top:244.40px;height:14.21px;line-height:14.21px">***</div>
<div class="tz" style="left:410.40px;width:24.40px;text-align:center;top:244.40px;height:14.21px;line-height:14.21px">台</div>
<div class="td" style="left:434.80px;width:31.50px;text-align:right;top:244.40px;height:14.21px;line-height:14.21px">3,000.00</div>
<div class="td" style="left:469.30px;width:32.00px;text-align:right;top:244.40px;height:14.21px;line-height:14.21px">90.00</div>
<div class="td" style="left:504.30px;width:31.90px;text-align:center;top:244.40px;height:14.21px;line-height:14.21px">2018/06/28</div>
<div class="td" style="left:536.20px;width:32.00px;text-align:center;top:244.40px;height:14.21px;line-height:14.21px">3 年</div>
<div class="td" style="left:568.20px;width:32.30px;text-align:center;top:244.40px;height:14.21px;line-height:14.21px">2021/06/28</div>
<div class="td" style="left:600.50px;width:32.50px;text-align:center;top:244.40px;height:14.21px;line-height:14.21px">36</div>
<div class="td" style="left:633.00px;width:29.40px;text-align:right;top:244.40px;height:14.21px;line-height:14.21px">80.83</div>
<div class="td" style="left:665.40px;width:32.30px;text-align:center;top:244.40px;height:14.21px;line-height:14.21px">36</div>
<div class="td" style="left:697.70px;width:34.50px;text-align:right;top:244.40px;height:14.21px;line-height:14.21px">2,910.00</div>
<div class="td" style="left:735.20px;width:32.60px;text-align:right;top:244.40px;height:14.21px;line-height:14.21px">90.00</div>
<div class="tds" style="left:770.80px;width:36.70px;text-align:center;top:244.40px;height:14.21px;line-height:14.21px">***</div>
<div class="tds" style="left:807.50px;width:33.00px;text-align:center;top:244.40px;height:14.21px;line-height:14.21px">***</div>
<div class="tz" style="left:840.50px;width:37.00px;text-align:center;top:244.40px;height:14.21px;line-height:14.21px">正常</div>
<div class="td" style="left:246.20px;width:24.20px;text-align:center;top:258.61px;height:14.21px;line-height:14.21px">12</div>
<div class="td" style="left:270.40px;width:32.10px;text-align:center;top:258.61px;height:14.21px;line-height:14.21px">F-1012</div>
<div class="tz" style="left:302.50px;width:31.80px;text-align:center;top:258.61px;height:14.21px;line-height:14.21px">通用设备</div>
<div class="tz" style="left:339.30px;width:43.30px;text-align:left;top:258.61px;height:14.21px;line-height:14.21px">复印机</div>
<div class="tds" style="left:377.60px;width:32.80px;text-align:center;top:258.61px;height:14.21px;line-height:14.21px">***</div>
<div class="tz" style="left:410.40px;width:24.40px;text-align:center;top:258.61px;height:14.21px;line-height:14.21px">台</div>
<div class="td" style="left:434.80px;width:31.50px;text-align:right;top:258.61px;height:14.21px;line-height:14.21px">3,500.00</div>
<div class="td" style="left:469.30px;width:32.00px;text-align:right;top:258.61px;height:14.21px;line-height:14.21px">70.00</div>
<div class="td" style="left:504.30px;width:31.90px;text-align:center;top:258.61px;height:14.21px;line-height:14.21px">2020/10/15</div>
<div class="td" style="left:536.20px;width:32.00px;text-align:center;top:258.61px;height:14.21px;line-height:14.21px">3 年</div>
<div class="td" style="left:568.20px;width:32.30px;text-align:center;top:258.61px;height:14.21px;line-height:14.21px">2023/10/15</div>
<div class="td" style="left:600.50px;width:32.50px;text-align:center;top:258.61px;height:14.21px;line-height:14.21px">36</div>
<div class="td" style="left:633.00px;width:29.40px;text-align:right;top:258.61px;height:14.21px;line-height:14.21px">95.28</div>
<div class="td" style="left:665.40px;width:32.30px;text-align:center;top:258.61px;height:14.21px;line-height:14.21px">36</div>
<div class="td" style="left:697.70px;width:34.50px;text-align:right;top:258.61px;height:14.21px;line-height:14.21px">3,430.00</div>
<div class="td" style="left:735.20px;width:32.60px;text-align:right;top:258.61px;height:14.21px;line-height:14.21px">70.00</div>
<div class="tds" style="left:770.80px;width:36.70px;text-align:center;top:258.61px;height:14.21px;line-height:14.21px">***</div>
<div class="tds" style="left:807.50px;width:33.00px;text-align:center;top:258.61px;height:14.21px;line-height:14.21px">***</div>
<div class="tzg" style="left:840.50px;width:37.00px;text-align:center;top:258.61px;height:14.21px;line-height:14.21px">报废</div>
<div class="td" style="left:246.20px;width:24.20px;text-align:center;top:272.82px;height:14.21px;line-height:14.21px">13</div>
<div class="td" style="left:270.40px;width:32.10px;text-align:center;top:272.82px;height:14.21px;line-height:14.21px">F-1013</div>
<div class="tz" style="left:302.50px;width:31.80px;text-align:center;top:272.82px;height:14.21px;line-height:14.21px">专用设备</div>
<div class="tz" style="left:339.30px;width:43.30px;text-align:left;top:272.82px;height:14.21px;line-height:14.21px">机床</div>
<div class="tds" style="left:377.60px;width:32.80px;text-align:center;top:272.82px;height:14.21px;line-height:14.21px">***</div>
<div class="tz" style="left:410.40px;width:24.40px;text-align:center;top:272.82px;height:14.21px;line-height:14.21px">台</div>
<div class="td" style="left:434.80px;width:31.50px;text-align:right;top:272.82px;height:14.21px;line-height:14.21px">60,000.00</div>
<div class="td" style="left:469.30px;width:32.00px;text-align:right;top:272.82px;height:14.21px;line-height:14.21px">1,800.00</div>
<div class="td" style="left:504.30px;width:31.90px;text-align:center;top:272.82px;height:14.21px;line-height:14.21px">2019/10/15</div>
<div class="td" style="left:536.20px;width:32.00px;text-align:center;top:272.82px;height:14.21px;line-height:14.21px">10 年</div>
<div class="td" style="left:568.20px;width:32.30px;text-align:center;top:272.82px;height:14.21px;line-height:14.21px">2029/10/15</div>
<div class="td" style="left:600.50px;width:32.50px;text-align:center;top:272.82px;height:14.21px;line-height:14.21px">120</div>
<div class="td" style="left:633.00px;width:29.40px;text-align:right;top:272.82px;height:14.21px;line-height:14.21px">485.00</div>
<div class="td" style="left:665.40px;width:32.30px;text-align:center;top:272.82px;height:14.21px;line-height:14.21px">63</div>
<div class="td" style="left:697.70px;width:34.50px;text-align:right;top:272.82px;height:14.21px;line-height:14.21px">30,555.00</div>
<div class="td" style="left:735.20px;width:32.60px;text-align:right;top:272.82px;height:14.21px;line-height:14.21px">29,445.00</div>
<div class="tds" style="left:770.80px;width:36.70px;text-align:center;top:272.82px;height:14.21px;line-height:14.21px">***</div>
<div class="tds" style="left:807.50px;width:33.00px;text-align:center;top:272.82px;height:14.21px;line-height:14.21px">***</div>
<div class="tz" style="left:840.50px;width:37.00px;text-align:center;top:272.82px;height:14.21px;line-height:14.21px">正常</div>
<div class="td" style="left:246.20px;width:24.20px;text-align:center;top:287.03px;height:14.21px;line-height:14.21px">14</div>
<div class="td" style="left:270.40px;width:32.10px;text-align:center;top:287.03px;height:14.21px;line-height:14.21px">F-1014</div>
<div class="tz" style="left:302.50px;width:31.80px;text-align:center;top:287.03px;height:14.21px;line-height:14.21px">通用设备</div>
<div class="tz" style="left:339.30px;width:43.30px;text-align:left;top:287.03px;height:14.21px;line-height:14.21px">卡车</div>
<div class="tds" style="left:377.60px;width:32.80px;text-align:center;top:287.03px;height:14.21px;line-height:14.21px">***</div>
<div class="tz" style="left:410.40px;width:24.40px;text-align:center;top:287.03px;height:14.21px;line-height:14.21px">辆</div>
<div class="td" style="left:434.80px;width:31.50px;text-align:right;top:287.03px;height:14.21px;line-height:14.21px">120,000.00</div>
<div class="td" style="left:469.30px;width:32.00px;text-align:right;top:287.03px;height:14.21px;line-height:14.21px">3,600.00</div>
<div class="td" style="left:504.30px;width:31.90px;text-align:center;top:287.03px;height:14.21px;line-height:14.21px">2018/10/01</div>
<div class="td" style="left:536.20px;width:32.00px;text-align:center;top:287.03px;height:14.21px;line-height:14.21px">4 年</div>
<div class="td" style="left:568.20px;width:32.30px;text-align:center;top:287.03px;height:14.21px;line-height:14.21px">2022/10/01</div>
<div class="td" style="left:600.50px;width:32.50px;text-align:center;top:287.03px;height:14.21px;line-height:14.21px">48</div>
<div class="td" style="left:633.00px;width:29.40px;text-align:right;top:287.03px;height:14.21px;line-height:14.21px">2,425.00</div>
<div class="td" style="left:665.40px;width:32.30px;text-align:center;top:287.03px;height:14.21px;line-height:14.21px">48</div>
<div class="td" style="left:697.70px;width:34.50px;text-align:right;top:287.03px;height:14.21px;line-height:14.21px">116,400.00</div>
<div class="td" style="left:735.20px;width:32.60px;text-align:right;top:287.03px;height:14.21px;line-height:14.21px">3,600.00</div>
<div class="tds" style="left:770.80px;width:36.70px;text-align:center;top:287.03px;height:14.21px;line-height:14.21px">***</div>
<div class="tds" style="left:807.50px;width:33.00px;text-align:center;top:287.03px;height:14.21px;line-height:14.21px">***</div>
<div class="tz" style="left:840.50px;width:37.00px;text-align:center;top:287.03px;height:14.21px;line-height:14.21px">正常</div>
<div class="td" style="left:246.20px;width:24.20px;text-align:center;top:301.24px;height:14.21px;line-height:14.21px">15</div>
<div class="td" style="left:270.40px;width:32.10px;text-align:center;top:301.24px;height:14.21px;line-height:14.21px">F-1015</div>
<div class="tz" style="left:302.50px;width:31.80px;text-align:center;top:301.24px;height:14.21px;line-height:14.21px">专用设备</div>
<div class="tz" style="left:339.30px;width:43.30px;text-align:left;top:301.24px;height:14.21px;line-height:14.21px">特种运输车</div>
<div class="tds" style="left:377.60px;width:32.80px;text-align:center;top:301.24px;height:14.21px;line-height:14.21px">***</div>
<div class="tz" style="left:410.40px;width:24.40px;text-align:center;top:301.24px;height:14.21px;line-height:14.21px">辆</div>
<div class="td" style="left:434.80px;width:31.50px;text-align:right;top:301.24px;height:14.21px;line-height:14.21px">300,000.00</div>
<div class="td" style="left:469.30px;width:32.00px;text-align:right;top:301.24px;height:14.21px;line-height:14.21px">12,000.00</div>
<div class="td" style="left:504.30px;width:31.90px;text-align:center;top:301.24px;height:14.21px;line-height:14.21px">2019/07/07</div>
<div class="td" style="left:536.20px;width:32.00px;text-align:center;top:301.24px;height:14.21px;line-height:14.21px">4 年</div>
<div class="td" style="left:568.20px;width:32.30px;text-align:center;top:301.24px;height:14.21px;line-height:14.21px">2023/07/07</div>
<div class="td" style="left:600.50px;width:32.50px;text-align:center;top:301.24px;height:14.21px;line-height:14.21px">48</div>
<div class="td" style="left:633.00px;width:29.40px;text-align:right;top:301.24px;height:14.21px;line-height:14.21px">6,000.00</div>
<div class="td" style="left:665.40px;width:32.30px;text-align:center;top:301.24px;height:14.21px;line-height:14.21px">48</div>
<div class="td" style="left:697.70px;width:34.50px;text-align:right;top:301.24px;height:14.21px;line-height:14.21px">288,000.00</div>
<div class="td" style="left:735.20px;width:32.60px;text-align:right;top:301.24px;height:14.21px;line-height:14.21px">12,000.00</div>
<div class="tds" style="left:770.80px;width:36.70px;text-align:center;top:301.24px;height:14.21px;line-height:14.21px">***</div>
<div class="tds" style="left:807.50px;width:33.00px;text-align:center;top:301.24px;height:14.21px;line-height:14.21px">***</div>
<div class="tz" style="left:840.50px;width:37.00px;text-align:center;top:301.24px;height:14.21px;line-height:14.21px">正常</div>
<div class="td" style="left:246.20px;width:24.20px;text-align:center;top:315.45px;height:14.21px;line-height:14.21px">16</div>
<div class="td" style="left:270.40px;width:32.10px;text-align:center;top:315.45px;height:14.21px;line-height:14.21px">F-1016</div>
<div class="tz" style="left:302.50px;width:31.80px;text-align:center;top:315.45px;height:14.21px;line-height:14.21px">图书档案</div>
<div class="tz" style="left:339.30px;width:43.30px;text-align:left;top:315.45px;height:14.21px;line-height:14.21px">工具书</div>
<div class="tds" style="left:377.60px;width:32.80px;text-align:center;top:315.45px;height:14.21px;line-height:14.21px">***</div>
<div class="tz" style="left:410.40px;width:24.40px;text-align:center;top:315.45px;height:14.21px;line-height:14.21px">本</div>
<div class="td" style="left:434.80px;width:31.50px;text-align:right;top:315.45px;height:14.21px;line-height:14.21px">3,500.00</div>
<div class="td" style="left:469.30px;width:32.00px;text-align:right;top:315.45px;height:14.21px;line-height:14.21px">175.00</div>
<div class="td" style="left:504.30px;width:31.90px;text-align:center;top:315.45px;height:14.21px;line-height:14.21px">2021/07/30</div>
<div class="td" style="left:536.20px;width:32.00px;text-align:center;top:315.45px;height:14.21px;line-height:14.21px">1 年</div>
<div class="td" style="left:568.20px;width:32.30px;text-align:center;top:315.45px;height:14.21px;line-height:14.21px">2022/07/30</div>
<div class="td" style="left:600.50px;width:32.50px;text-align:center;top:315.45px;height:14.21px;line-height:14.21px">12</div>
<div class="td" style="left:633.00px;width:29.40px;text-align:right;top:315.45px;height:14.21px;line-height:14.21px">277.08</div>
<div class="td" style="left:665.40px;width:32.30px;text-align:center;top:315.45px;height:14.21px;line-height:14.21px">12</div>
<div class="td" style="left:697.70px;width:34.50px;text-align:right;top:315.45px;height:14.21px;line-height:14.21px">3,325.00</div>
<div class="td" style="left:735.20px;width:32.60px;text-align:right;top:315.45px;height:14.21px;line-height:14.21px">175.00</div>
<div class="tds" style="left:770.80px;width:36.70px;text-align:center;top:315.45px;height:14.21px;line-height:14.21px">***</div>
<div class="tds" style="left:807.50px;width:33.00px;text-align:center;top:315.45px;height:14.21px;line-height:14.21px">***</div>
<div class="tz" style="left:840.50px;width:37.00px;text-align:center;top:315.45px;height:14.21px;line-height:14.21px">正常</div>
<div class="td" style="left:246.20px;width:24.20px;text-align:center;top:329.66px;height:14.21px;line-height:14.21px">17</div>
<div class="td" style="left:270.40px;width:32.10px;text-align:center;top:329.66px;height:14.21px;line-height:14.21px">F-1017</div>
<div class="tz" style="left:302.50px;width:31.80px;text-align:center;top:329.66px;height:14.21px;line-height:14.21px">家具装具</div>
<div class="tz" style="left:339.30px;width:43.30px;text-align:left;top:329.66px;height:14.21px;line-height:14.21px">会议桌</div>
<div class="tds" style="left:377.60px;width:32.80px;text-align:center;top:329.66px;height:14.21px;line-height:14.21px">***</div>
<div class="tz" style="left:410.40px;width:24.40px;text-align:center;top:329.66px;height:14.21px;line-height:14.21px">张</div>
<div class="td" style="left:434.80px;width:31.50px;text-align:right;top:329.66px;height:14.21px;line-height:14.21px">5,000.00</div>
<div class="td" style="left:469.30px;width:32.00px;text-align:right;top:329.66px;height:14.21px;line-height:14.21px">250.00</div>
<div class="td" style="left:504.30px;width:31.90px;text-align:center;top:329.66px;height:14.21px;line-height:14.21px">2018/01/05</div>
<div class="td" style="left:536.20px;width:32.00px;text-align:center;top:329.66px;height:14.21px;line-height:14.21px">5 年</div>
<div class="td" style="left:568.20px;width:32.30px;text-align:center;top:329.66px;height:14.21px;line-height:14.21px">2023/01/05</div>
<div class="td" style="left:600.50px;width:32.50px;text-align:center;top:329.66px;height:14.21px;line-height:14.21px">60</div>
<div class="td" style="left:633.00px;width:29.40px;text-align:right;top:329.66px;height:14.21px;line-height:14.21px">79.17</div>
<div class="td" style="left:665.40px;width:32.30px;text-align:center;top:329.66px;height:14.21px;line-height:14.21px">60</div>
<div class="td" style="left:697.70px;width:34.50px;text-align:right;top:329.66px;height:14.21px;line-height:14.21px">4,750.00</div>
<div class="td" style="left:735.20px;width:32.60px;text-align:right;top:329.66px;height:14.21px;line-height:14.21px">250.00</div>
<div class="tds" style="left:770.80px;width:36.70px;text-align:center;top:329.66px;height:14.21px;line-height:14.21px">***</div>
<div class="tds" style="left:807.50px;width:33.00px;text-align:center;top:329.66px;height:14.21px;line-height:14.21px">***</div>
<div class="tz" style="left:840.50px;width:37.00px;text-align:center;top:329.66px;height:14.21px;line-height:14.21px">正常</div>
<div class="td" style="left:246.20px;width:24.20px;text-align:center;top:343.87px;height:14.21px;line-height:14.21px">18</div>
<div class="td" style="left:270.40px;width:32.10px;text-align:center;top:343.87px;height:14.21px;line-height:14.21px">F-1018</div>
<div class="tz" style="left:302.50px;width:31.80px;text-align:center;top:343.87px;height:14.21px;line-height:14.21px">文物陈列品</div>
<div class="tz" style="left:339.30px;width:43.30px;text-align:left;top:343.87px;height:14.21px;line-height:14.21px">大厅陈列物</div>
<div class="tds" style="left:377.60px;width:32.80px;text-align:center;top:343.87px;height:14.21px;line-height:14.21px">***</div>
<div class="tz" style="left:410.40px;width:24.40px;text-align:center;top:343.87px;height:14.21px;line-height:14.21px">件</div>
<div class="td" style="left:434.80px;width:31.50px;text-align:right;top:343.87px;height:14.21px;line-height:14.21px">40,000.00</div>
<div class="td" style="left:469.30px;width:32.00px;text-align:right;top:343.87px;height:14.21px;line-height:14.21px">1,200.00</div>
<div class="td" style="left:504.30px;width:31.90px;text-align:center;top:343.87px;height:14.21px;line-height:14.21px">2018/01/01</div>
<div class="td" style="left:536.20px;width:32.00px;text-align:center;top:343.87px;height:14.21px;line-height:14.21px">5 年</div>
<div class="td" style="left:568.20px;width:32.30px;text-align:center;top:343.87px;height:14.21px;line-height:14.21px">2023/01/01</div>
<div class="td" style="left:600.50px;width:32.50px;text-align:center;top:343.87px;height:14.21px;line-height:14.21px">60</div>
<div class="td" style="left:633.00px;width:29.40px;text-align:right;top:343.87px;height:14.21px;line-height:14.21px">646.67</div>
<div class="td" style="left:665.40px;width:32.30px;text-align:center;top:343.87px;height:14.21px;line-height:14.21px">60</div>
<div class="td" style="left:697.70px;width:34.50px;text-align:right;top:343.87px;height:14.21px;line-height:14.21px">38,800.00</div>
<div class="td" style="left:735.20px;width:32.60px;text-align:right;top:343.87px;height:14.21px;line-height:14.21px">1,200.00</div>
<div class="tds" style="left:770.80px;width:36.70px;text-align:center;top:343.87px;height:14.21px;line-height:14.21px">***</div>
<div class="tds" style="left:807.50px;width:33.00px;text-align:center;top:343.87px;height:14.21px;line-height:14.21px">***</div>
<div class="tz" style="left:840.50px;width:37.00px;text-align:center;top:343.87px;height:14.21px;line-height:14.21px">待修</div>
<div class="td" style="left:568.20px;width:32.30px;text-align:center;top:358.08px;height:14.21px;line-height:14.21px">1899/12/30</div>
<div class="td" style="left:600.50px;width:32.50px;text-align:center;top:358.08px;height:14.21px;line-height:14.21px">0</div>
<div class="dash" style="left:633.00px;width:22.90px;text-align:right;top:358.08px;height:14.21px;line-height:14.21px">-</div>
<div class="td" style="left:665.40px;width:32.30px;text-align:center;top:358.08px;height:14.21px;line-height:14.21px">0</div>
<div class="dash" style="left:697.70px;width:28.00px;text-align:right;top:358.08px;height:14.21px;line-height:14.21px">-</div>
<div class="dash" style="left:735.20px;width:25.60px;text-align:right;top:358.08px;height:14.21px;line-height:14.21px">-</div>
<div class="td" style="left:568.20px;width:32.30px;text-align:center;top:372.29px;height:14.21px;line-height:14.21px">1899/12/30</div>
<div class="td" style="left:600.50px;width:32.50px;text-align:center;top:372.29px;height:14.21px;line-height:14.21px">0</div>
<div class="dash" style="left:633.00px;width:22.90px;text-align:right;top:372.29px;height:14.21px;line-height:14.21px">-</div>
<div class="td" style="left:665.40px;width:32.30px;text-align:center;top:372.29px;height:14.21px;line-height:14.21px">0</div>
<div class="dash" style="left:697.70px;width:28.00px;text-align:right;top:372.29px;height:14.21px;line-height:14.21px">-</div>
<div class="dash" style="left:735.20px;width:25.60px;text-align:right;top:372.29px;height:14.21px;line-height:14.21px">-</div>
<div class="td" style="left:568.20px;width:32.30px;text-align:center;top:386.50px;height:14.21px;line-height:14.21px">1899/12/30</div>
<div class="td" style="left:600.50px;width:32.50px;text-align:center;top:386.50px;height:14.21px;line-height:14.21px">0</div>
<div class="dash" style="left:633.00px;width:22.90px;text-align:right;top:386.50px;height:14.21px;line-height:14.21px">-</div>
<div class="td" style="left:665.40px;width:32.30px;text-align:center;top:386.50px;height:14.21px;line-height:14.21px">0</div>
<div class="dash" style="left:697.70px;width:28.00px;text-align:right;top:386.50px;height:14.21px;line-height:14.21px">-</div>
<div class="dash" style="left:735.20px;width:25.60px;text-align:right;top:386.50px;height:14.21px;line-height:14.21px">-</div>
<div class="td" style="left:568.20px;width:32.30px;text-align:center;top:400.71px;height:14.21px;line-height:14.21px">1899/12/30</div>
<div class="td" style="left:600.50px;width:32.50px;text-align:center;top:400.71px;height:14.21px;line-height:14.21px">0</div>
<div class="dash" style="left:633.00px;width:22.90px;text-align:right;top:400.71px;height:14.21px;line-height:14.21px">-</div>
<div class="td" style="left:665.40px;width:32.30px;text-align:center;top:400.71px;height:14.21px;line-height:14.21px">0</div>
<div class="dash" style="left:697.70px;width:28.00px;text-align:right;top:400.71px;height:14.21px;line-height:14.21px">-</div>
<div class="dash" style="left:735.20px;width:25.60px;text-align:right;top:400.71px;height:14.21px;line-height:14.21px">-</div>
<div class="td" style="left:568.20px;width:32.30px;text-align:center;top:414.92px;height:14.21px;line-height:14.21px">1899/12/30</div>
<div class="td" style="left:600.50px;width:32.50px;text-align:center;top:414.92px;height:14.21px;line-height:14.21px">0</div>
<div class="dash" style="left:633.00px;width:22.90px;text-align:right;top:414.92px;height:14.21px;line-height:14.21px">-</div>
<div class="td" style="left:665.40px;width:32.30px;text-align:center;top:414.92px;height:14.21px;line-height:14.21px">0</div>
<div class="dash" style="left:697.70px;width:28.00px;text-align:right;top:414.92px;height:14.21px;line-height:14.21px">-</div>
<div class="dash" style="left:735.20px;width:25.60px;text-align:right;top:414.92px;height:14.21px;line-height:14.21px">-</div>
<div class="td" style="left:568.20px;width:32.30px;text-align:center;top:429.13px;height:14.21px;line-height:14.21px">1899/12/30</div>
<div class="td" style="left:600.50px;width:32.50px;text-align:center;top:429.13px;height:14.21px;line-height:14.21px">0</div>
<div class="dash" style="left:633.00px;width:22.90px;text-align:right;top:429.13px;height:14.21px;line-height:14.21px">-</div>
<div class="td" style="left:665.40px;width:32.30px;text-align:center;top:429.13px;height:14.21px;line-height:14.21px">0</div>
<div class="dash" style="left:697.70px;width:28.00px;text-align:right;top:429.13px;height:14.21px;line-height:14.21px">-</div>
<div class="dash" style="left:735.20px;width:25.60px;text-align:right;top:429.13px;height:14.21px;line-height:14.21px">-</div>
<div class="td" style="left:568.20px;width:32.30px;text-align:center;top:443.34px;height:14.21px;line-height:14.21px">1899/12/30</div>
<div class="td" style="left:600.50px;width:32.50px;text-align:center;top:443.34px;height:14.21px;line-height:14.21px">0</div>
<div class="dash" style="left:633.00px;width:22.90px;text-align:right;top:443.34px;height:14.21px;line-height:14.21px">-</div>
<div class="td" style="left:665.40px;width:32.30px;text-align:center;top:443.34px;height:14.21px;line-height:14.21px">0</div>
<div class="dash" style="left:697.70px;width:28.00px;text-align:right;top:443.34px;height:14.21px;line-height:14.21px">-</div>
<div class="dash" style="left:735.20px;width:25.60px;text-align:right;top:443.34px;height:14.21px;line-height:14.21px">-</div>
<div class="td" style="left:568.20px;width:32.30px;text-align:center;top:457.55px;height:14.21px;line-height:14.21px">1899/12/30</div>
<div class="td" style="left:600.50px;width:32.50px;text-align:center;top:457.55px;height:14.21px;line-height:14.21px">0</div>
<div class="dash" style="left:633.00px;width:22.90px;text-align:right;top:457.55px;height:14.21px;line-height:14.21px">-</div>
<div class="td" style="left:665.40px;width:32.30px;text-align:center;top:457.55px;height:14.21px;line-height:14.21px">0</div>
<div class="dash" style="left:697.70px;width:28.00px;text-align:right;top:457.55px;height:14.21px;line-height:14.21px">-</div>
<div class="dash" style="left:735.20px;width:25.60px;text-align:right;top:457.55px;height:14.21px;line-height:14.21px">-</div>
<div class="td" style="left:568.20px;width:32.30px;text-align:center;top:471.76px;height:14.21px;line-height:14.21px">1899/12/30</div>
<div class="td" style="left:600.50px;width:32.50px;text-align:center;top:471.76px;height:14.21px;line-height:14.21px">0</div>
<div class="dash" style="left:633.00px;width:22.90px;text-align:right;top:471.76px;height:14.21px;line-height:14.21px">-</div>
<div class="td" style="left:665.40px;width:32.30px;text-align:center;top:471.76px;height:14.21px;line-height:14.21px">0</div>
<div class="dash" style="left:697.70px;width:28.00px;text-align:right;top:471.76px;height:14.21px;line-height:14.21px">-</div>
<div class="dash" style="left:735.20px;width:25.60px;text-align:right;top:471.76px;height:14.21px;line-height:14.21px">-</div>
<div class="td" style="left:568.20px;width:32.30px;text-align:center;top:485.97px;height:14.21px;line-height:14.21px">1899/12/30</div>
<div class="td" style="left:600.50px;width:32.50px;text-align:center;top:485.97px;height:14.21px;line-height:14.21px">0</div>
<div class="dash" style="left:633.00px;width:22.90px;text-align:right;top:485.97px;height:14.21px;line-height:14.21px">-</div>
<div class="td" style="left:665.40px;width:32.30px;text-align:center;top:485.97px;height:14.21px;line-height:14.21px">0</div>
<div class="dash" style="left:697.70px;width:28.00px;text-align:right;top:485.97px;height:14.21px;line-height:14.21px">-</div>
<div class="dash" style="left:735.20px;width:25.60px;text-align:right;top:485.97px;height:14.21px;line-height:14.21px">-</div>
<div class="td" style="left:568.20px;width:32.30px;text-align:center;top:500.18px;height:14.21px;line-height:14.21px">1899/12/30</div>
<div class="td" style="left:600.50px;width:32.50px;text-align:center;top:500.18px;height:14.21px;line-height:14.21px">0</div>
<div class="dash" style="left:633.00px;width:22.90px;text-align:right;top:500.18px;height:14.21px;line-height:14.21px">-</div>
<div class="td" style="left:665.40px;width:32.30px;text-align:center;top:500.18px;height:14.21px;line-height:14.21px">0</div>
<div class="dash" style="left:697.70px;width:28.00px;text-align:right;top:500.18px;height:14.21px;line-height:14.21px">-</div>
<div class="dash" style="left:735.20px;width:25.60px;text-align:right;top:500.18px;height:14.21px;line-height:14.21px">-</div>
<div class="td" style="left:568.20px;width:32.30px;text-align:center;top:514.39px;height:14.21px;line-height:14.21px">1899/12/30</div>
<div class="td" style="left:600.50px;width:32.50px;text-align:center;top:514.39px;height:14.21px;line-height:14.21px">0</div>
<div class="dash" style="left:633.00px;width:22.90px;text-align:right;top:514.39px;height:14.21px;line-height:14.21px">-</div>
<div class="td" style="left:665.40px;width:32.30px;text-align:center;top:514.39px;height:14.21px;line-height:14.21px">0</div>
<div class="dash" style="left:697.70px;width:28.00px;text-align:right;top:514.39px;height:14.21px;line-height:14.21px">-</div>
<div class="dash" style="left:735.20px;width:25.60px;text-align:right;top:514.39px;height:14.21px;line-height:14.21px">-</div>
<div class="td" style="left:568.20px;width:32.30px;text-align:center;top:528.60px;height:14.21px;line-height:14.21px">1899/12/30</div>
<div class="td" style="left:600.50px;width:32.50px;text-align:center;top:528.60px;height:14.21px;line-height:14.21px">0</div>
<div class="dash" style="left:633.00px;width:22.90px;text-align:right;top:528.60px;height:14.21px;line-height:14.21px">-</div>
<div class="td" style="left:665.40px;width:32.30px;text-align:center;top:528.60px;height:14.21px;line-height:14.21px">0</div>
<div class="dash" style="left:697.70px;width:28.00px;text-align:right;top:528.60px;height:14.21px;line-height:14.21px">-</div>
<div class="dash" style="left:735.20px;width:25.60px;text-align:right;top:528.60px;height:14.21px;line-height:14.21px">-</div>
<div class="td" style="left:568.20px;width:32.30px;text-align:center;top:542.81px;height:14.21px;line-height:14.21px">1899/12/30</div>
<div class="td" style="left:600.50px;width:32.50px;text-align:center;top:542.81px;height:14.21px;line-height:14.21px">0</div>
<div class="dash" style="left:633.00px;width:22.90px;text-align:right;top:542.81px;height:14.21px;line-height:14.21px">-</div>
<div class="td" style="left:665.40px;width:32.30px;text-align:center;top:542.81px;height:14.21px;line-height:14.21px">0</div>
<div class="dash" style="left:697.70px;width:28.00px;text-align:right;top:542.81px;height:14.21px;line-height:14.21px">-</div>
<div class="dash" style="left:735.20px;width:25.60px;text-align:right;top:542.81px;height:14.21px;line-height:14.21px">-</div>
<div class="td" style="left:568.20px;width:32.30px;text-align:center;top:557.02px;height:14.21px;line-height:14.21px">1899/12/30</div>
<div class="td" style="left:600.50px;width:32.50px;text-align:center;top:557.02px;height:14.21px;line-height:14.21px">0</div>
<div class="dash" style="left:633.00px;width:22.90px;text-align:right;top:557.02px;height:14.21px;line-height:14.21px">-</div>
<div class="td" style="left:665.40px;width:32.30px;text-align:center;top:557.02px;height:14.21px;line-height:14.21px">0</div>
<div class="dash" style="left:697.70px;width:28.00px;text-align:right;top:557.02px;height:14.21px;line-height:14.21px">-</div>
<div class="dash" style="left:735.20px;width:25.60px;text-align:right;top:557.02px;height:14.21px;line-height:14.21px">-</div>
<div class="td" style="left:568.20px;width:32.30px;text-align:center;top:571.23px;height:14.21px;line-height:14.21px">1899/12/30</div>
<div class="td" style="left:600.50px;width:32.50px;text-align:center;top:571.23px;height:14.21px;line-height:14.21px">0</div>
<div class="dash" style="left:633.00px;width:22.90px;text-align:right;top:571.23px;height:14.21px;line-height:14.21px">-</div>
<div class="td" style="left:665.40px;width:32.30px;text-align:center;top:571.23px;height:14.21px;line-height:14.21px">0</div>
<div class="dash" style="left:697.70px;width:28.00px;text-align:right;top:571.23px;height:14.21px;line-height:14.21px">-</div>
<div class="dash" style="left:735.20px;width:25.60px;text-align:right;top:571.23px;height:14.21px;line-height:14.21px">-</div>
<div class="td" style="left:568.20px;width:32.30px;text-align:center;top:585.44px;height:14.21px;line-height:14.21px">1899/12/30</div>
<div class="td" style="left:600.50px;width:32.50px;text-align:center;top:585.44px;height:14.21px;line-height:14.21px">0</div>
<div class="dash" style="left:633.00px;width:22.90px;text-align:right;top:585.44px;height:14.21px;line-height:14.21px">-</div>
<div class="td" style="left:665.40px;width:32.30px;text-align:center;top:585.44px;height:14.21px;line-height:14.21px">0</div>
<div class="dash" style="left:697.70px;width:28.00px;text-align:right;top:585.44px;height:14.21px;line-height:14.21px">-</div>
<div class="dash" style="left:735.20px;width:25.60px;text-align:right;top:585.44px;height:14.21px;line-height:14.21px">-</div>
<div class="td" style="left:568.20px;width:32.30px;text-align:center;top:599.65px;height:14.21px;line-height:14.21px">1899/12/30</div>
<div class="td" style="left:600.50px;width:32.50px;text-align:center;top:599.65px;height:14.21px;line-height:14.21px">0</div>
<div class="dash" style="left:633.00px;width:22.90px;text-align:right;top:599.65px;height:14.21px;line-height:14.21px">-</div>
<div class="td" style="left:665.40px;width:32.30px;text-align:center;top:599.65px;height:14.21px;line-height:14.21px">0</div>
<div class="dash" style="left:697.70px;width:28.00px;text-align:right;top:599.65px;height:14.21px;line-height:14.21px">-</div>
<div class="dash" style="left:735.20px;width:25.60px;text-align:right;top:599.65px;height:14.21px;line-height:14.21px">-</div>
<div class="td" style="left:568.20px;width:32.30px;text-align:center;top:613.86px;height:14.21px;line-height:14.21px">1899/12/30</div>
<div class="td" style="left:600.50px;width:32.50px;text-align:center;top:613.86px;height:14.21px;line-height:14.21px">0</div>
<div class="dash" style="left:633.00px;width:22.90px;text-align:right;top:613.86px;height:14.21px;line-height:14.21px">-</div>
<div class="td" style="left:665.40px;width:32.30px;text-align:center;top:613.86px;height:14.21px;line-height:14.21px">0</div>
<div class="dash" style="left:697.70px;width:28.00px;text-align:right;top:613.86px;height:14.21px;line-height:14.21px">-</div>
<div class="dash" style="left:735.20px;width:25.60px;text-align:right;top:613.86px;height:14.21px;line-height:14.21px">-</div>
</body></html>
